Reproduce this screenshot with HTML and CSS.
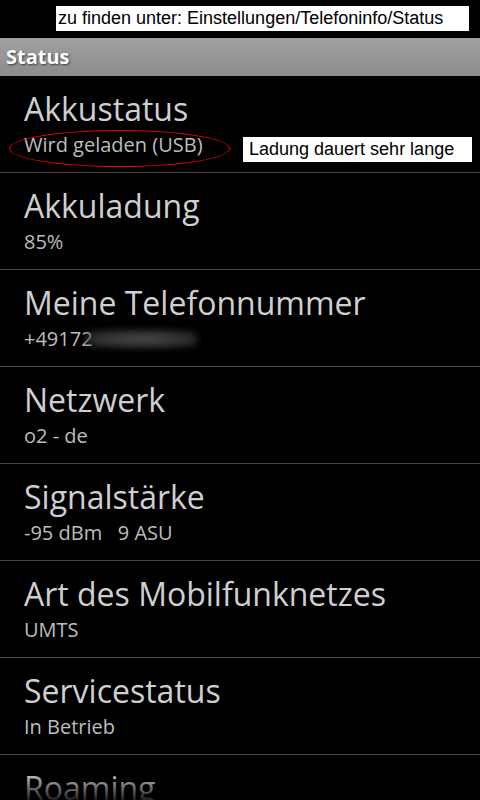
FILE: index.html
```html
<!DOCTYPE html>
<html lang="de">

<head>
  <meta charset="UTF-8">
  <meta name="viewport" content="width=device-width, initial-scale=1.0">
  <title>Status</title>
  <link rel="stylesheet" href="styles.css">
</head>

<body>
  <!-- Annotation on top -->
  <div class="topstrip">
    <div class="note note-top">zu finden unter: Einstellungen/Telefoninfo/Status</div>
  </div>

  <div class="titlebar">Status</div>

  <ul class="list">
    <li class="item">
      <div class="item-title">Akkustatus</div>
      <div class="item-sub">
        <span class="marked">Wird geladen (USB)</span>
        <span class="note note-side">Ladung dauert sehr lange</span>
      </div>
    </li>
    <li class="item">
      <div class="item-title">Akkuladung</div>
      <div class="item-sub">85%</div>
    </li>
    <li class="item">
      <div class="item-title">Meine Telefonnummer</div>
      <div class="item-sub">+49172<span class="smudge"></span></div>
    </li>
    <li class="item">
      <div class="item-title">Netzwerk</div>
      <div class="item-sub">o2 - de</div>
    </li>
    <li class="item">
      <div class="item-title">Signalstärke</div>
      <div class="item-sub">-95 dBm&nbsp;&nbsp; 9 ASU</div>
    </li>
    <li class="item">
      <div class="item-title">Art des Mobilfunknetzes</div>
      <div class="item-sub">UMTS</div>
    </li>
    <li class="item">
      <div class="item-title">Servicestatus</div>
      <div class="item-sub">In Betrieb</div>
    </li>
    <li class="item item-last">
      <div class="item-title">Roaming</div>
    </li>
  </ul>

  <div class="fade"></div>
</body>

</html>
```

FILE: styles.css
```css
body {
  margin: 0;
  background: #000;
  font-family: "Open Sans", "DejaVu Sans", sans-serif;
  overflow: hidden;
  height: 800px;
}

.topstrip {
  height: 38px;
  padding: 6px 0 0 56px;
  box-sizing: border-box;
}

.note {
  background: #fff;
  color: #000;
  font-family: "Liberation Sans", Arial, sans-serif;
  font-size: 18px;
  line-height: 25px;
  padding: 0 0 0 2px;
  box-sizing: border-box;
}

.note-top {
  width: 413px;
  height: 25px;
}

.titlebar {
  height: 38px;
  background: linear-gradient(#a0a0a0, #8c8c8c);
  color: #fff;
  font-weight: bold;
  font-size: 20px;
  line-height: 38px;
  padding-left: 6px;
  text-shadow: 1px 1px 2px rgba(0, 0, 0, 0.6);
}

.list {
  list-style: none;
  margin: 0;
  padding: 0;
}

.item {
  height: 97px;
  box-sizing: border-box;
  padding: 15px 8px 0 24px;
  border-bottom: 1px solid #464646;
}

.item-last {
  border-bottom: none;
}

.item-title {
  color: #cfcfcf;
  font-size: 32px;
  line-height: 36px;
  margin-bottom: 5px;
}

.item-sub {
  color: #bdbdbd;
  font-size: 20px;
  line-height: 26px;
  display: flex;
  align-items: flex-start;
}

.marked {
  position: relative;
}

/* red hand-drawn ring */
.marked::after {
  content: "";
  position: absolute;
  left: -15px;
  top: -2px;
  width: 219px;
  height: 35px;
  border: 1px solid #e00000;
  border-radius: 50%;
}

.note-side {
  margin: 5px 0 0 auto;
  width: 229px;
  height: 25px;
  padding-left: 6px;
  color: #000;
}

.smudge {
  display: inline-block;
  width: 112px;
  height: 18px;
  margin: 4px 0 0 -8px;
  background: radial-gradient(ellipse at center, #5a5a5a 0%, #3c3c3c 60%, rgba(0, 0, 0, 0) 100%);
  filter: blur(3px);
  opacity: 0.8;
}

.fade {
  position: fixed;
  left: 0;
  right: 0;
  bottom: 0;
  height: 28px;
  background: linear-gradient(rgba(0, 0, 0, 0), rgba(0, 0, 0, 0.85));
}
```
